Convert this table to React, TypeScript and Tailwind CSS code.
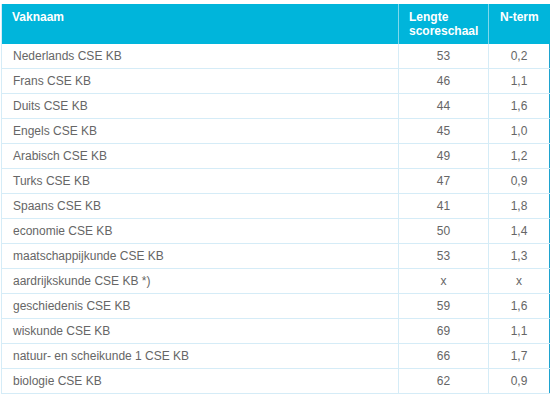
import React from 'react';

type Row = {
  vak: string;
  lengte: string;
  nterm: string;
};

const rows: Row[] = [
  { vak: 'Nederlands CSE KB', lengte: '53', nterm: '0,2' },
  { vak: 'Frans CSE KB', lengte: '46', nterm: '1,1' },
  { vak: 'Duits CSE KB', lengte: '44', nterm: '1,6' },
  { vak: 'Engels CSE KB', lengte: '45', nterm: '1,0' },
  { vak: 'Arabisch CSE KB', lengte: '49', nterm: '1,2' },
  { vak: 'Turks CSE KB', lengte: '47', nterm: '0,9' },
  { vak: 'Spaans CSE KB', lengte: '41', nterm: '1,8' },
  { vak: 'economie CSE KB', lengte: '50', nterm: '1,4' },
  { vak: 'maatschappijkunde CSE KB', lengte: '53', nterm: '1,3' },
  { vak: 'aardrijkskunde CSE KB *)', lengte: 'x', nterm: 'x' },
  { vak: 'geschiedenis CSE KB', lengte: '59', nterm: '1,6' },
  { vak: 'wiskunde CSE KB', lengte: '69', nterm: '1,1' },
  { vak: 'natuur- en scheikunde 1 CSE KB', lengte: '66', nterm: '1,7' },
  { vak: 'biologie CSE KB', lengte: '62', nterm: '0,9' },
];

const App: React.FC = () => {
  return (
    <div className="w-[553px] h-[397px] bg-white pt-[4px] pl-[1px] font-['Liberation_Sans',Arial,sans-serif] text-[12px]">
      <div className="w-[549px] border-l border-[#d5ecf7]">
        <div className="flex h-[40px] bg-[#00b5db] font-bold text-white leading-[14px]">
          <div className="w-[396px] pl-[10px] pt-[6px]">Vaknaam</div>
          <div className="w-[90px] border-l border-[#7fd8ec] pl-[10px] pt-[6px]">
            Lengte
            <br />
            scoreschaal
          </div>
          <div className="w-[62px] border-l border-[#7fd8ec] pl-[11px] pt-[6px]">N-term</div>
        </div>
        {rows.map(row => (
          <div key={row.vak} className="flex h-[25px] border-b border-[#d5ecf7] text-[#666666]">
            <div className="w-[396px] pl-[11px] flex items-center">{row.vak}</div>
            <div className="w-[90px] border-l border-[#d5ecf7] flex items-center justify-center">
              {row.lengte}
            </div>
            <div className="w-[62px] border-l border-r border-l-[#d5ecf7] border-r-[#1ea3cf] flex items-center justify-center">
              {row.nterm}
            </div>
          </div>
        ))}
      </div>
    </div>
  );
};

export default App;
